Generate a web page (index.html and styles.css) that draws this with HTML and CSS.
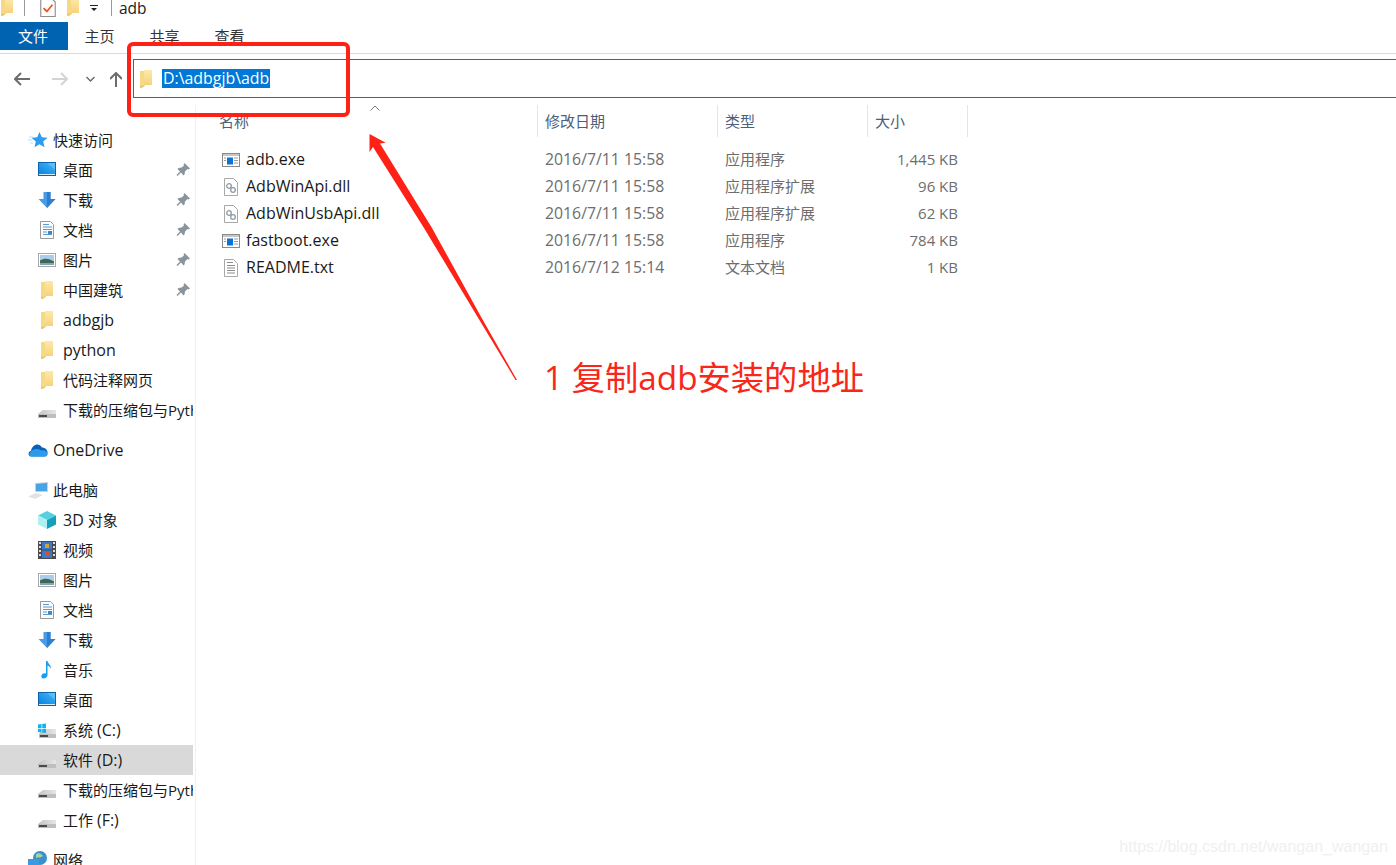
FILE: index.html
```html
<!DOCTYPE html>
<html lang="zh-CN">
<head>
    <meta charset="UTF-8">
    <title>adb</title>
    <link rel="stylesheet" href="styles.css">
</head>
<body>
    <svg class="sprite" xmlns="http://www.w3.org/2000/svg">
        <defs>
            <linearGradient id="folderfill" x1="0" y1="0" x2="0" y2="1">
                <stop offset="0" stop-color="#fce9ab"/>
                <stop offset="1" stop-color="#f7d27a"/>
            </linearGradient>
            <linearGradient id="deskfill" x1="0" y1="1" x2="1" y2="0">
                <stop offset="0" stop-color="#0a84e2"/>
                <stop offset="1" stop-color="#42b4f7"/>
            </linearGradient>
            <linearGradient id="drivefill" x1="0" y1="0" x2="1" y2="0">
                <stop offset="0" stop-color="#c4c4c4"/>
                <stop offset="1" stop-color="#e6e6e6"/>
            </linearGradient>
        </defs>
        <symbol id="i-folder" viewBox="0 0 18 18">
            <path d="M3 1h5v15l-3 1.500H3z" fill="#f6d985"/>
            <path d="M7 0h8v15H7z" fill="url(#folderfill)"/>
            <path d="M3 15.500h4v1l-2.500 1.500H3z" fill="#ecc76e"/>
        </symbol>
        <symbol id="i-desktop" viewBox="0 0 18 18">
            <rect x="0" y="1" width="18" height="14" fill="#0d62ad"/>
            <rect x="1" y="2" width="16" height="11" fill="url(#deskfill)"/>
            <path d="M1 13h16v1H1z" fill="#d8ecfa"/>
            <path d="M9 2h8v7z" fill="#7ccdf9" opacity=".5"/>
        </symbol>
        <symbol id="i-down" viewBox="0 0 18 18">
            <path d="M5.500 1h7v7h5L9 17 .5 8h5z" fill="#4a9be6"/>
            <path d="M9 1h3.500v7h5L9 17z" fill="#2f7fd1"/>
        </symbol>
        <symbol id="i-doc" viewBox="0 0 18 18">
            <path d="M2.500 .5h10l3 3v14h-13z" fill="#fbfbfb" stroke="#9a9a9a"/>
            <path d="M5 3h6v1H5zM5 5.500h9v1H5zM5 8h9v1H5zM5 10.500h4v1H5zM5 13h9v1H5z" fill="#5b9bd0"/>
            <path d="M10 10h4v3h-4z" fill="#3f87c5"/>
        </symbol>
        <symbol id="i-pic" viewBox="0 0 18 18">
            <rect x=".5" y="2.500" width="17" height="13" fill="#fff" stroke="#a8a8a8"/>
            <rect x="2" y="4" width="14" height="10" fill="#a9cdea"/>
            <path d="M2 9.500c3-2 7-2.500 10-1l4 2V14H2z" fill="#3e6a55"/>
            <path d="M2 12h14v2H2z" fill="#7fa7b8"/>
        </symbol>
        <symbol id="i-pin" viewBox="0 0 14 14">
            <path d="M8.500 0l5.500 5.500-1.500 1-1-.5L9 8.500l-.5 3-1 1-2.500-3-3.500 3.500-1-1L4 8.500 1.500 6l1-1 3-.5L8 2.500l-.5-1z" fill="#8b949c"/>
        </symbol>
        <symbol id="i-drive" viewBox="0 0 18 18">
            <path d="M0 13l5-4h13v4z" fill="url(#drivefill)"/>
            <path d="M0 13h18v4H0z" fill="#bfbfbf"/>
            <path d="M1 14h8v2H1z" fill="#4a4a4a"/>
        </symbol>
        <symbol id="i-cdrive" viewBox="0 0 18 18">
            <path d="M1 13l5-5h12v5z" fill="url(#drivefill)"/>
            <path d="M1 13h17v4H1z" fill="#bfbfbf"/>
            <path d="M2 14h8v2H2z" fill="#4a4a4a"/>
            <path d="M0 3.500l3.500-.5v4H0zM4.200 2.900L8 2.500V7H4.200zM0 7.700h3.500v3.800L0 11zM4.200 7.700H8V12l-3.800-.5z" fill="#0fb4ef"/>
        </symbol>
        <symbol id="i-star" viewBox="0 0 20 18">
            <path d="M11.500 1l2.300 5.300 5.700.5-4.300 3.800 1.300 5.600-5-3-5 3 1.300-5.600-4.300-3.800 5.700-.5z" fill="#2a9df0"/>
            <path d="M1 6h4M0 9h4M2 12h3" stroke="#b5dcf7" fill="none"/>
        </symbol>
        <symbol id="i-cloud" viewBox="0 0 20 15">
            <path d="M3 14C0 14-.5 9 3 8.500 4 2 11-.5 14 5c3 0 6 2.500 5.500 6-.2 2-1.500 3-3 3z" fill="#0a62b8"/>
            <path d="M3.500 14c-2.500 0-3-3.500-.5-5 3-3 7-3 10-1 3-1 7 1 6.500 4-.3 1.500-1.500 2-3 2z" fill="#2b9bea"/>
        </symbol>
        <symbol id="i-pc" viewBox="0 0 20 18">
            <path d="M7 2l13-1v10L7 11z" fill="#c8d2da"/>
            <path d="M8 3l11-1v8L8 10z" fill="#4aa3e3"/>
            <path d="M0 15.500l8-3.500 7 2-8 4z" fill="#dfe3e6"/>
        </symbol>
        <symbol id="i-cube" viewBox="0 0 18 18">
            <path d="M9 0l9 4.500-9 4.500-9-4.500z" fill="#58cfe0"/>
            <path d="M0 4.500L9 9v9l-9-4.500z" fill="#aef0f2"/>
            <path d="M18 4.500L9 9v9l9-4.500z" fill="#12a0bb"/>
        </symbol>
        <symbol id="i-video" viewBox="0 0 18 18">
            <rect width="18" height="18" fill="#4b4b4b"/>
            <path d="M1 1h2v2H1zM1 5h2v2H1zM1 9h2v2H1zM1 13h2v2H1zM15 1h2v2h-2zM15 5h2v2h-2zM15 9h2v2h-2zM15 13h2v2h-2z" fill="#ddd"/>
            <rect x="4" y="1" width="10" height="7.500" fill="#3a78c8"/>
            <rect x="4" y="9.500" width="10" height="7.500" fill="#3a78c8"/>
            <path d="M7 3h4v4H7z" fill="#c9a43a"/>
            <path d="M7 11h4v4H7z" fill="#c9563a"/>
        </symbol>
        <symbol id="i-music" viewBox="0 0 18 18">
            <path d="M8 0h1.500c.5 3 4 4 3.500 8-.5-2-2-3-3.500-3.500V14c0 2-2 3.500-4 3.500S3 16 3.500 14.500 6 12 8 12.500z" fill="#1a9cf0"/>
        </symbol>
        <symbol id="i-net" viewBox="0 0 20 18">
            <circle cx="12" cy="7" r="7" fill="#3d8fc9"/>
            <path d="M8 3c3-2 6 0 7 2-2 2-5 1-7 2z" fill="#9fd3a8"/>
            <rect x="0" y="8" width="11" height="10" fill="#3b9ae0"/>
        </symbol>
        <symbol id="i-exe" viewBox="0 0 18 16">
            <rect x=".5" y="1.500" width="17" height="13" fill="#fff" stroke="#8a8a8a"/>
            <path d="M1 2h16v2H1z" fill="#c6c6c6"/>
            <rect x="5" y="5.500" width="6" height="7" fill="#0a74d6"/>
            <path d="M12 5.500h4v1h-4zM12 8h4v1h-4zM12 10.500h4v1h-4zM2 5.500h2v1H2zM2 8h2v1H2z" fill="#9a9a9a"/>
        </symbol>
        <symbol id="i-dll" viewBox="0 0 14 18">
            <path d="M.5 .5h9l4 4v13H.5z" fill="#fff" stroke="#a8a8a8"/>
            <circle cx="5" cy="8" r="2.300" fill="none" stroke="#8f9aa5" stroke-width="1.300"/>
            <circle cx="9" cy="12" r="2.300" fill="none" stroke="#8f9aa5" stroke-width="1.300"/>
        </symbol>
        <symbol id="i-txt" viewBox="0 0 14 18">
            <path d="M.5 .5h9l4 4v13H.5z" fill="#fff" stroke="#a8a8a8"/>
            <path d="M3 3h6v1H3zM3 6h8v1H3zM3 8.500h8v1H3zM3 11h8v1H3zM3 13.500h8v1H3z" fill="#8c8c8c"/>
        </symbol>
        <symbol id="i-props" viewBox="0 0 14 18">
            <path d="M.5 .5h9l4 4v13H.5z" fill="#fff" stroke="#8c8c8c"/>
            <path d="M3 10l3 3 5-6" fill="none" stroke="#e8541e" stroke-width="1.600"/>
        </symbol>
    </svg>

    <div class="titlebar">
        <svg class="qa-folder"><use href="#i-folder"/></svg>
        <span class="qa-sep"></span>
        <svg class="qa-props"><use href="#i-props"/></svg>
        <svg class="qa-folder2"><use href="#i-folder"/></svg>
        <svg class="qa-caret" viewBox="0 0 8 8"><path d="M0 1h8v1H0zM1 4h6L4 7z" fill="#222"/></svg>
        <span class="qa-sep qa-sep2"></span>
        <span class="title">adb</span>
    </div>

    <div class="tabs">
        <span class="tab tab-file">文件</span>
        <span class="tab">主页</span>
        <span class="tab">共享</span>
        <span class="tab">查看</span>
    </div>

    <div class="addressrow">
        <div class="navbtns">
            <svg class="nav-back" viewBox="0 0 16 14"><path d="M7 1L1 7l6 6M1 7h15" fill="none" stroke="#6d6d6d" stroke-width="2"/></svg>
            <svg class="nav-fwd" viewBox="0 0 16 14"><path d="M9 1l6 6-6 6M15 7H0" fill="none" stroke="#d4d4d4" stroke-width="2"/></svg>
            <svg class="nav-drop" viewBox="0 0 9 6"><path d="M.5 1l4 4 4-4" fill="none" stroke="#6d6d6d" stroke-width="1.500"/></svg>
            <svg class="nav-up" viewBox="0 0 12 15"><path d="M0 7l6-6 6 6M6 1v14" fill="none" stroke="#6d6d6d" stroke-width="2"/></svg>
        </div>
        <div class="addressbox">
            <svg class="addr-folder"><use href="#i-folder"/></svg>
            <span class="addr-text">D:\adbgjb\adb</span>
        </div>
    </div>

    <div class="main">
        <nav class="sidebar">
            <div class="navgroup">
                <div class="row top"><svg class="ic"><use href="#i-star"/></svg><span class="label cjk">快速访问</span></div>
                <div class="row"><svg class="ic"><use href="#i-desktop"/></svg><span class="label cjk">桌面</span><svg class="pin"><use href="#i-pin"/></svg></div>
                <div class="row"><svg class="ic"><use href="#i-down"/></svg><span class="label cjk">下载</span><svg class="pin"><use href="#i-pin"/></svg></div>
                <div class="row"><svg class="ic"><use href="#i-doc"/></svg><span class="label cjk">文档</span><svg class="pin"><use href="#i-pin"/></svg></div>
                <div class="row"><svg class="ic"><use href="#i-pic"/></svg><span class="label cjk">图片</span><svg class="pin"><use href="#i-pin"/></svg></div>
                <div class="row"><svg class="ic"><use href="#i-folder"/></svg><span class="label cjk">中国建筑</span><svg class="pin"><use href="#i-pin"/></svg></div>
                <div class="row"><svg class="ic"><use href="#i-folder"/></svg><span class="label lat">adbgjb</span></div>
                <div class="row"><svg class="ic"><use href="#i-folder"/></svg><span class="label lat">python</span></div>
                <div class="row"><svg class="ic"><use href="#i-folder"/></svg><span class="label cjk">代码注释网页</span></div>
                <div class="row"><svg class="ic"><use href="#i-drive"/></svg><span class="label cjk">下载的压缩包与Python</span></div>
            </div>
            <div class="navgroup">
                <div class="row top"><svg class="ic"><use href="#i-cloud"/></svg><span class="label lat">OneDrive</span></div>
            </div>
            <div class="navgroup">
                <div class="row top"><svg class="ic"><use href="#i-pc"/></svg><span class="label cjk">此电脑</span></div>
                <div class="row"><svg class="ic"><use href="#i-cube"/></svg><span class="label"><span class="lat">3D</span> 对象</span></div>
                <div class="row"><svg class="ic"><use href="#i-video"/></svg><span class="label cjk">视频</span></div>
                <div class="row"><svg class="ic"><use href="#i-pic"/></svg><span class="label cjk">图片</span></div>
                <div class="row"><svg class="ic"><use href="#i-doc"/></svg><span class="label cjk">文档</span></div>
                <div class="row"><svg class="ic"><use href="#i-down"/></svg><span class="label cjk">下载</span></div>
                <div class="row"><svg class="ic"><use href="#i-music"/></svg><span class="label cjk">音乐</span></div>
                <div class="row"><svg class="ic"><use href="#i-desktop"/></svg><span class="label cjk">桌面</span></div>
                <div class="row"><svg class="ic"><use href="#i-cdrive"/></svg><span class="label">系统 <span class="lat">(C:)</span></span></div>
                <div class="row selected"><svg class="ic"><use href="#i-drive"/></svg><span class="label">软件 <span class="lat">(D:)</span></span></div>
                <div class="row"><svg class="ic"><use href="#i-drive"/></svg><span class="label cjk">下载的压缩包与Python</span></div>
                <div class="row"><svg class="ic"><use href="#i-drive"/></svg><span class="label">工作 <span class="lat">(F:)</span></span></div>
            </div>
            <div class="navgroup">
                <div class="row top"><svg class="ic"><use href="#i-net"/></svg><span class="label cjk">网络</span></div>
            </div>
        </nav>

        <section class="files">
            <div class="filehead">
                <div class="col-name head">名称</div>
                <div class="col-date head">修改日期</div>
                <div class="col-type head">类型</div>
                <div class="col-size head">大小</div>
                <svg class="sortcaret" viewBox="0 0 10 6"><path d="M.5 5.500L5 1l4.500 4.500" fill="none" stroke="#7a7a7a"/></svg>
            </div>
            <div class="filerows">
                <div class="filerow">
                    <div class="col-name"><svg class="fileic"><use href="#i-exe"/></svg>adb.exe</div>
                    <div class="col-date">2016/7/11 15:58</div>
                    <div class="col-type">应用程序</div>
                    <div class="col-size">1,445 KB</div>
                </div>
                <div class="filerow">
                    <div class="col-name"><svg class="fileic"><use href="#i-dll"/></svg>AdbWinApi.dll</div>
                    <div class="col-date">2016/7/11 15:58</div>
                    <div class="col-type">应用程序扩展</div>
                    <div class="col-size">96 KB</div>
                </div>
                <div class="filerow">
                    <div class="col-name"><svg class="fileic"><use href="#i-dll"/></svg>AdbWinUsbApi.dll</div>
                    <div class="col-date">2016/7/11 15:58</div>
                    <div class="col-type">应用程序扩展</div>
                    <div class="col-size">62 KB</div>
                </div>
                <div class="filerow">
                    <div class="col-name"><svg class="fileic"><use href="#i-exe"/></svg>fastboot.exe</div>
                    <div class="col-date">2016/7/11 15:58</div>
                    <div class="col-type">应用程序</div>
                    <div class="col-size">784 KB</div>
                </div>
                <div class="filerow">
                    <div class="col-name"><svg class="fileic"><use href="#i-txt"/></svg>README.txt</div>
                    <div class="col-date">2016/7/12 15:14</div>
                    <div class="col-type">文本文档</div>
                    <div class="col-size">1 KB</div>
                </div>
            </div>
        </section>
    </div>

    <!-- red markup drawn over the screenshot -->
    <svg class="markup" viewBox="0 0 1396 865">
        <rect x="129" y="44" width="219" height="71" rx="4" fill="none" stroke="#ff2116" stroke-width="4"/>
        <path d="M369.500 134L385.700 142.700 380 143.500 432 228 480 315 517 380 515.500 380 424 228 373 147 369.500 152z" fill="#ff2116"/>
    </svg>
    <div class="note">1 复制adb安装的地址</div>
    <div class="watermark">https://blog.csdn.net/wangan_wangan</div>
</body>
</html>
```

FILE: styles.css
```css
html, body {
    margin: 0;
    padding: 0;
}
body {
    position: relative;
    width: 1396px;
    height: 865px;
    overflow: hidden;
    background: #fff;
    color: #1a1a1a;
    font-family: "Open Sans", "Noto Sans CJK SC", sans-serif;
    font-size: 15px;
}
.sprite {
    position: absolute;
    width: 0;
    height: 0;
}
.lat {
    font-size: 16px;
}

/* title bar */
.titlebar {
    display: flex;
    align-items: flex-start;
    height: 22px;
}
.qa-folder {
    width: 18px;
    height: 18px;
    margin: -2px 0 0 -2px;
}
.qa-sep {
    width: 1px;
    height: 16px;
    margin-left: 8px;
    background: #9a9a9a;
}
.qa-props {
    width: 16px;
    height: 20px;
    margin: -3px 0 0 15px;
}
.qa-folder2 {
    width: 18px;
    height: 18px;
    margin: -2px 0 0 8px;
}
.qa-caret {
    width: 8px;
    height: 8px;
    margin: 4px 0 0 8px;
}
.qa-sep2 {
    margin-left: 13px;
}
.title {
    margin-left: 7px;
    line-height: 16px;
    font-size: 15.500px;
}

/* ribbon tabs */
.tabs {
    display: flex;
    height: 28px;
    padding-bottom: 3px;
    border-bottom: 1px solid #dadbdc;
}
.tab {
    width: 65px;
    line-height: 28px;
    text-align: center;
    color: #333;
}
.tab-file {
    box-sizing: border-box;
    width: 68px;
    padding-right: 2px;
    margin-right: -1px;
    background: #0063b1;
    color: #fff;
}

/* address row */
.addressrow {
    display: flex;
    height: 51px;
}
.navbtns {
    display: flex;
    align-items: center;
    width: 133px;
    height: 50px;
}
.navbtns svg {
    flex: none;
}
.nav-back {
    width: 16px;
    height: 14px;
    margin-left: 14px;
}
.nav-fwd {
    width: 16px;
    height: 14px;
    margin-left: 22px;
}
.nav-drop {
    width: 9px;
    height: 6px;
    margin-left: 18px;
}
.nav-up {
    width: 12px;
    height: 15px;
    margin-left: 15px;
}
.addressbox {
    display: flex;
    align-items: center;
    box-sizing: border-box;
    flex: 1;
    height: 39px;
    margin: 5px -2px 0 0;
    border: 1px solid #1a6fb5;
}
.addr-folder {
    width: 18px;
    height: 18px;
    margin-left: 3px;
}
.addr-text {
    margin-left: 7px;
    padding: 0 1px;
    line-height: 19px;
    font-size: 15.900px;
    background: #0078d7;
    color: #fff;
}

/* layout under the address row */
.main {
    display: flex;
}
.sidebar {
    box-sizing: border-box;
    width: 196px;
    padding-top: 20px;
    border-right: 1px solid #f1f1f1;
    flex: none;
}
.navgroup {
    margin-bottom: 10px;
}
.row {
    display: flex;
    align-items: center;
    width: 193px;
    height: 30px;
    padding-left: 38px;
    box-sizing: border-box;
    overflow: hidden;
    white-space: nowrap;
}
.row.top {
    padding-left: 28px;
}
.row.selected {
    background: #d9d9d9;
}
.ic {
    flex: none;
    width: 18px;
    height: 18px;
    margin-right: 7px;
}
.top .ic {
    width: 20px;
    margin-right: 5px;
}
.label {
    flex: none;
}
.label.cjk {
    margin-top: -2px;
}
.pin {
    flex: none;
    width: 14px;
    height: 14px;
    margin-left: auto;
    margin-right: 3px;
}

/* file list */
.files {
    flex: 1;
    padding-left: 16px;
}
.filehead {
    position: relative;
    display: flex;
    height: 32px;
    margin-bottom: 9px;
}
.filerow {
    display: flex;
    height: 27px;
    line-height: 27px;
}
.col-name {
    box-sizing: border-box;
    width: 326px;
    padding-left: 7px;
}
.col-date {
    box-sizing: border-box;
    width: 180px;
    padding-left: 7px;
    color: #6d6d6d;
}
.col-type {
    box-sizing: border-box;
    width: 150px;
    padding-left: 7px;
    color: #6d6d6d;
}
.col-size {
    box-sizing: border-box;
    width: 100px;
    padding-left: 7px;
    color: #6d6d6d;
}
.filerow .col-size {
    padding: 0 10px 0 0;
    text-align: right;
}
.filerow .col-date {
    font-size: 15.800px;
}
.filerow .col-name {
    display: flex;
    align-items: center;
    padding-left: 10px;
    font-size: 16px;
}
.head {
    border-right: 1px solid #e5e5e5;
    line-height: 32px;
    color: #4c607a;
}
.fileic {
    flex: none;
    width: 18px;
    height: 18px;
    margin-right: 6px;
}
.sortcaret {
    position: absolute;
    left: 158px;
    top: 0;
    width: 10px;
    height: 6px;
}

/* annotations on top of everything */
.markup {
    position: absolute;
    left: 0;
    top: 0;
    width: 1396px;
    height: 865px;
}
.note {
    position: absolute;
    left: 544px;
    top: 354px;
    font-size: 33.300px;
    line-height: 46px;
    color: #f9261a;
    white-space: nowrap;
}
.watermark {
    position: absolute;
    right: 8px;
    top: 838px;
    font-family: "Liberation Sans", sans-serif;
    font-size: 16px;
    line-height: 18px;
    color: #f0f0f0;
}
```
